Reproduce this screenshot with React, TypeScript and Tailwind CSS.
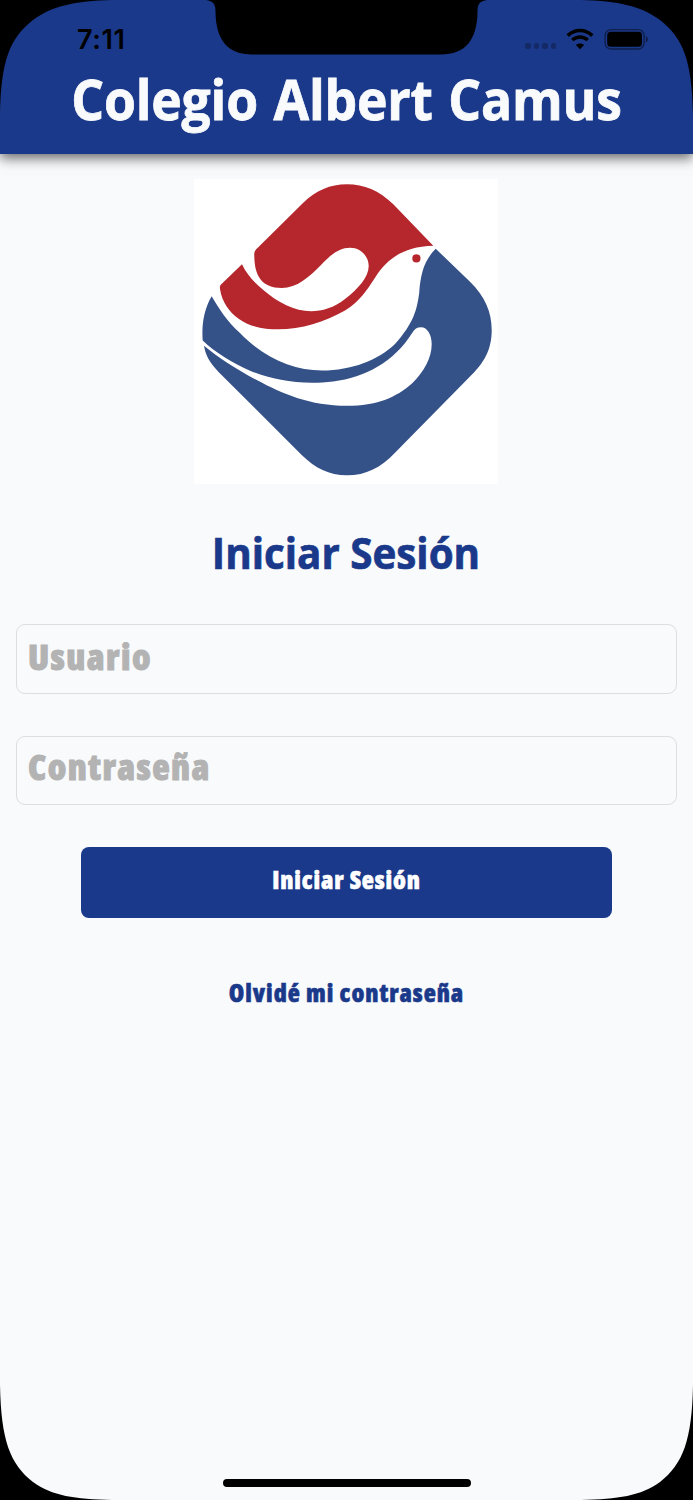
import { useState } from 'react'

function StatusBar() {
  return (
    <div className="flex h-[58px] items-start justify-between pr-[44px] pl-[77px] text-black">
      <span className="mt-[23px] font-['Inter'] text-[27px] leading-[33px] font-semibold tracking-[0.6px]">7:11</span>
      <div className="mt-[28px] flex items-center">
        <div className="mt-[14px] flex gap-[3px] opacity-25">
          {[0, 1, 2, 3].map((dot) => (
            <span key={dot} className="h-[5.5px] w-[5.5px] rounded-[2px] bg-black" />
          ))}
        </div>
        <svg className="mr-[10px] ml-[10px] h-[22px] w-[28px]" viewBox="0 0 28 22" fill="none" stroke="#000">
          <path d="M1.7 7.6C8.7 0.8 19.3 0.8 26.3 7.6" strokeWidth="3.6" />
          <path d="M6.2 12.1C10.8 8 17.2 8 21.8 12.1" strokeWidth="3.4" />
          <path d="M14 21.3L9.9 17C12.2 15 15.8 15 18.1 17Z" fill="#000" stroke="none" />
        </svg>
        <svg className="h-[22px] w-[45px]" viewBox="0 0 45 22">
          <rect x="1.1" y="1.6" width="39" height="19.4" rx="6" fill="none" stroke="#000" strokeOpacity="0.45" strokeWidth="1.4" />
          <rect x="3.2" y="3.8" width="34.8" height="15" rx="3.6" fill="#000" />
          <path d="M41.8 8C44.6 9 44.6 13.6 41.8 14.6Z" fill="#000" fillOpacity="0.45" />
        </svg>
      </div>
    </div>
  )
}

function Logo() {
  return (
    <svg className="mr-[1px] h-[305px] w-[304px] bg-white" viewBox="194 179 304 305">
      <path
        fill="#b5272d"
        d="M433.3 245.7L393.3 204.3C379 190.5 364 184.3 347 184.3C330 184.3 316 190.5 303 203L258 247.5C254.5 250.5 254 252.5 254.3 256C254.5 276 262 288 281.7 288C297 288 309 277 321 265C331 254.5 339 247.7 350 247.7C361 247.7 368.7 256.5 368.7 266C368.7 277 358 289 345 299C334.5 307.5 322 311.3 311 311.3C295 311.3 277 302 263.3 290C254 282.5 246.5 274 242 264.3L221 284.5C219.7 286 219.8 287 220 289C222 302 229 312 239 319C250 327 264 329.3 278.3 329.3C301 329.3 325 322 345 310.5C360 301 367 290 375 277.7C387 259 403 246.5 433.3 245.7Z"
      />
      <path
        fill="#355288"
        d="M435.7 248.7L470 281.7C485 296.5 491.7 312 491.7 330C491.7 349 485 362.5 468.3 378.3L395 452.7C381 467.5 366 475.3 347 475.3C329 475.3 315 468 301.7 455L218.3 371.7C209 361.5 205.5 355 204 345.7C217 356.5 235 368.5 256.7 380C283 394 310 405.8 347 405.8C377 405.8 396 397.5 412 383.5C424 371.5 431.7 358 431.7 344C431.7 335 427.5 327.3 421 327.3C417 327.3 414.5 329 412.5 332.5C394 362 365 377.5 333.3 381.5C300 385.5 272 379.5 250 370.7C233 363 215 352.5 202.7 340.5C201.5 325 204 309 211.7 296.3C218 307 227.5 322.5 240 333C264 358 293 370.5 322 370.5C352 370.5 378 360 395 344C414 323 417 309 419.2 293C420.5 273 424.5 260 435.7 248.7Z"
      />
      <circle cx="416.4" cy="258.4" r="4.1" fill="#b5272d" />
    </svg>
  )
}

function ScreenFrame() {
  return (
    <svg className="pointer-events-none absolute inset-0 h-[1500px] w-[693px]" viewBox="0 0 693 1500">
      <path d="M0 0H112C75 1 52 6 33 20C10 38 1 60 0 115Z" />
      <path d="M693 0H581C618 1 641 6 660 20C683 38 692 60 693 115Z" />
      <path d="M0 1500H112C75 1499 52 1496 33 1482C10 1464 1 1440 0 1385Z" />
      <path d="M693 1500H581C618 1499 641 1496 660 1482C683 1464 692 1440 693 1385Z" />
      <path d="M206 0C213 1 215.5 4 215.5 11C215.5 40 228 54.5 252 54.5H441C465 54.5 477.5 40 477.5 11C477.5 4 480 1 487 0Z" />
    </svg>
  )
}

export default function App() {
  const [user, setUser] = useState('')
  const [password, setPassword] = useState('')

  return (
    <div className="relative flex h-[1500px] w-[693px] flex-col overflow-hidden bg-[#f8fafc] font-['Open_Sans',sans-serif] text-[#1a398a]">
      <header className="h-[153.5px] shrink-0 bg-[#1a398a] shadow-[0_4px_12px_rgba(0,0,0,0.6)]">
        <StatusBar />
        <h1 className="scale-x-[0.922] text-center text-[56px] leading-[80px] font-bold tracking-[-0.2px] whitespace-nowrap text-[#f8fafc] [word-spacing:2.5px] [-webkit-text-stroke:0.8px_#f8fafc]">
          Colegio Albert Camus
        </h1>
      </header>

      <main className="flex flex-col items-center px-4 pt-[25.5px]">
        <Logo />
        <h2 className="mt-[37px] mr-[2px] scale-x-[0.938] text-[43px] leading-[64px] font-bold [-webkit-text-stroke:0.7px_#1a398a]">
          Iniciar Sesión
        </h2>

        <form className="mt-[39px] flex w-full flex-col items-center" onSubmit={(e) => e.preventDefault()}>
          <input
            type="text"
            placeholder="Usuario"
            value={user}
            onChange={(e) => setUser(e.target.value)}
            className="h-[70px] w-full rounded-[9px] border border-[#dcdee0] pr-3 pb-[6px] pl-[11px] text-[36px] font-extrabold tracking-[1.45px] font-stretch-[75%] placeholder:text-[#b3b3b3] placeholder:[-webkit-text-stroke:1px_#b3b3b3]"
          />
          <input
            type="password"
            placeholder="Contraseña"
            value={password}
            onChange={(e) => setPassword(e.target.value)}
            className="mt-[42px] h-[69px] w-full rounded-[9px] border border-[#dcdee0] pr-3 pb-[8px] pl-[11px] text-[36px] font-extrabold tracking-[1.45px] font-stretch-[75%] placeholder:text-[#b3b3b3] placeholder:[-webkit-text-stroke:1px_#b3b3b3]"
          />
          <button
            type="submit"
            className="mt-[42px] h-[71px] w-[531px] rounded-[8px] bg-[#1a398a] pb-[6px] text-[25px] font-extrabold tracking-[0.85px] text-white font-stretch-[75%] [-webkit-text-stroke:0.6px_#fff]"
          >
            Iniciar Sesión
          </button>
        </form>

        <a
          href="#"
          className="mt-[56px] text-[25px] leading-[36px] font-extrabold tracking-[0.95px] font-stretch-[75%] [-webkit-text-stroke:0.6px_#1a398a]"
        >
          Olvidé mi contraseña
        </a>
      </main>

      <ScreenFrame />
      <div className="absolute bottom-[13px] left-[223px] h-[8px] w-[247.5px] rounded-full bg-black" />
    </div>
  )
}
